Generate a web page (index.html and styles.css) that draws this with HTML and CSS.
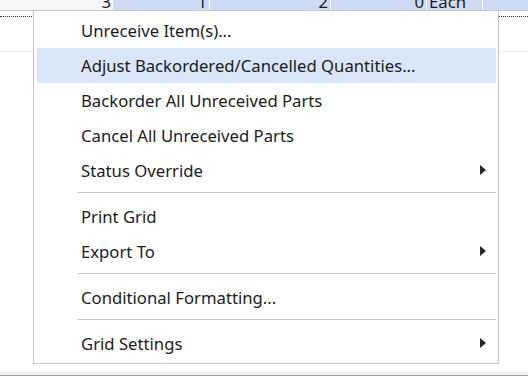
FILE: index.html
```html
<!DOCTYPE html>
<html lang="en">
<head>
<meta charset="UTF-8">
<title>Receiving Grid Menu</title>
<link rel="stylesheet" href="styles.css">
</head>
<body>
<div class="grid">
  <div class="row">
    <div class="cell c-line">3</div>
    <div class="cell c-rcv sel">1</div>
    <div class="cell c-ord sel">2</div>
    <div class="cell c-bo sel">0</div>
    <div class="cell c-uom sel">Each</div>
    <div class="cell c-rest sel"></div>
  </div>
  <div class="focus"></div>
  <div class="gridline"></div>
</div>

<div class="menu">
  <div class="item">Unreceive Item(s)...</div>
  <div class="item hover">Adjust Backordered/Cancelled Quantities...</div>
  <div class="item">Backorder All Unreceived Parts</div>
  <div class="item">Cancel All Unreceived Parts</div>
  <div class="item sub">Status Override</div>
  <div class="sep"></div>
  <div class="item">Print Grid</div>
  <div class="item sub">Export To</div>
  <div class="sep"></div>
  <div class="item">Conditional Formatting...</div>
  <div class="sep"></div>
  <div class="item sub">Grid Settings</div>
</div>

<div class="footer"></div>
</body>
</html>
```

FILE: styles.css
```css
body {
  margin: 0;
  width: 528px;
  height: 376px;
  overflow: hidden;
  position: relative;
  background: #fff;
  font-family: "Noto Sans", "Open Sans", sans-serif;
  color: #1b1b1b;
}
.grid {
  height: 372px;
}
.row {
  display: flex;
  height: 10px;
  border-bottom: 1px solid #c9c9c9;
  background: #f7f7fa;
  overflow: hidden;
}
.cell {
  font-size: 16.7px;
  line-height: 1;
  margin-top: -6px;
  height: 18px;
  text-align: right;
  padding: 0 2px;
  box-sizing: border-box;
  border-right: 1px solid #fff;
}
.cell.sel { background: #cddcf4; }
.c-line { width: 114px; border-right-color: #dcdce6; }
.c-rcv { width: 96px; }
.c-ord { width: 121px; }
.c-bo { width: 96px; }
.c-uom { width: 56px; text-align: left; }
.c-rest { flex: 1; border-right: 0; }
.focus {
  margin-top: 5px;
  border-top: 1px dotted #333;
}
.gridline {
  margin-top: 34px;
  border-top: 1px solid #ececec;
}
.footer {
  height: 4px;
  background: #f2f2f2;
  border-bottom: 1px solid #a3a3a3;
  box-sizing: border-box;
}
.menu {
  position: absolute;
  left: 33px;
  top: 10px;
  width: 466px;
  box-sizing: border-box;
  padding: 2px;
  background: #fff;
  border: 1px solid #c6c6c6;
}
.item {
  position: relative;
  height: 35px;
  line-height: 36px;
  padding-left: 45px;
  font-size: 16.7px;
  white-space: nowrap;
}
.item.hover {
  background: #d9e6f8;
  margin-left: 1px;
  padding-left: 44px;
}
.item.sub::after {
  content: "";
  position: absolute;
  left: 444px;
  top: 12px;
  border-left: 6px solid #262626;
  border-top: 5.5px solid transparent;
  border-bottom: 5.5px solid transparent;
}
.sep {
  height: 11px;
  margin-left: 41px;
  box-sizing: border-box;
  padding-top: 4px;
}
.sep::before {
  content: "";
  display: block;
  border-top: 1px solid #c8c8c8;
}
```
